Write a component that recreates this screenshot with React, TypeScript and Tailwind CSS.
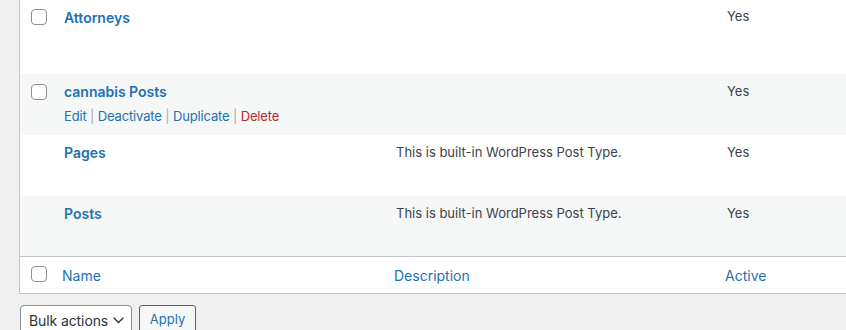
import React from 'react';

type Row = {
  name: string;
  desc?: string;
  checkbox: boolean;
  actions?: boolean;
  striped: boolean;
  height: string;
};

const rows: Row[] = [
  { name: 'Attorneys', checkbox: true, striped: false, height: 'h-[74px]' },
  { name: 'cannabis Posts', checkbox: true, actions: true, striped: true, height: 'h-[61px]' },
  { name: 'Pages', desc: 'This is built-in WordPress Post Type.', checkbox: false, striped: false, height: 'h-[61px]' },
  { name: 'Posts', desc: 'This is built-in WordPress Post Type.', checkbox: false, striped: true, height: 'h-[60px]' },
];

function Checkbox() {
  return (
    <span className="block w-4 h-4 rounded-[4px] border border-[#8c8f94] bg-white" />
  );
}

const font = { fontFamily: 'Inter, "Liberation Sans", sans-serif' };

export default function App() {
  return (
    <div className="h-[330px] w-full overflow-hidden bg-[#f0f0f1] pl-[19px]" style={font}>
      {/* Post types table */}
      <div className="w-[860px] border border-t-0 border-[#c3c4c7] bg-white">
        {rows.map((row) => (
          <div
            key={row.name}
            className={`grid grid-cols-[34px_332px_331px_1fr] ${row.height} ${row.striped ? 'bg-[#f6f7f7]' : 'bg-white'}`}
          >
            <div className={`pl-[11px] ${row.name === 'Attorneys' ? 'pt-[9px]' : 'pt-[10px]'}`}>
              {row.checkbox && <Checkbox />}
            </div>
            <div className="pl-[10px] pt-[8px]">
              <div className="text-[14px] leading-[19px] font-semibold text-[#2271b1]">{row.name}</div>
              {row.actions && (
                <div className="mt-[5px] text-[13px] leading-[20px] tracking-[-0.15px] text-[#a7aaad]">
                  <span className="text-[#2271b1]">Edit</span> |{' '}
                  <span className="text-[#2271b1]">Deactivate</span> |{' '}
                  <span className="text-[#2271b1]">Duplicate</span> |{' '}
                  <span className="text-[#b32d2e]">Delete</span>
                </div>
              )}
            </div>
            <div className="pl-[10px] pt-[8px] text-[13px] leading-[19px] text-[#3c434a]">{row.desc}</div>
            <div
              className={`pl-[10px] text-[13px] leading-[19px] text-[#3c434a] ${row.name === 'Attorneys' ? 'pt-[7px]' : 'pt-[8px]'}`}
            >
              Yes
            </div>
          </div>
        ))}

        {/* footer headings */}
        <div className="grid grid-cols-[34px_332px_331px_1fr] h-[37px] border-t border-[#c3c4c7] text-[14px] leading-[19px] text-[#2271b1]">
          <div className="pl-[11px] pt-[9px]">
            <Checkbox />
          </div>
          <div className="pl-[8px] pt-[9px]">Name</div>
          <div className="pl-[8px] pt-[9px]">Description</div>
          <div className="pl-[8px] pt-[9px]">Active</div>
        </div>
      </div>

      {/* bulk actions */}
      <div className="flex gap-[7px] pt-[11px] pl-px">
        <div className="flex items-center w-[112px] h-[30px] pl-[8px] pr-[7px] rounded-[4px] border border-[#8c8f94] bg-white text-[14px] tracking-[-0.1px] text-[#2c3338]">
          <span>Bulk actions</span>
          <svg width="11" height="7" viewBox="0 0 11 7" className="ml-auto mt-[1px]">
            <path d="M0.7 0.7L5.5 5.5L10.3 0.7" fill="none" stroke="#2c3338" strokeWidth="1.4" />
          </svg>
        </div>
        <div className="flex items-center justify-center w-[57px] h-[30px] rounded-[3px] border border-[#2271b1] bg-[#f6f7f7] text-[13px] text-[#2271b1]">
          Apply
        </div>
      </div>
    </div>
  );
}
